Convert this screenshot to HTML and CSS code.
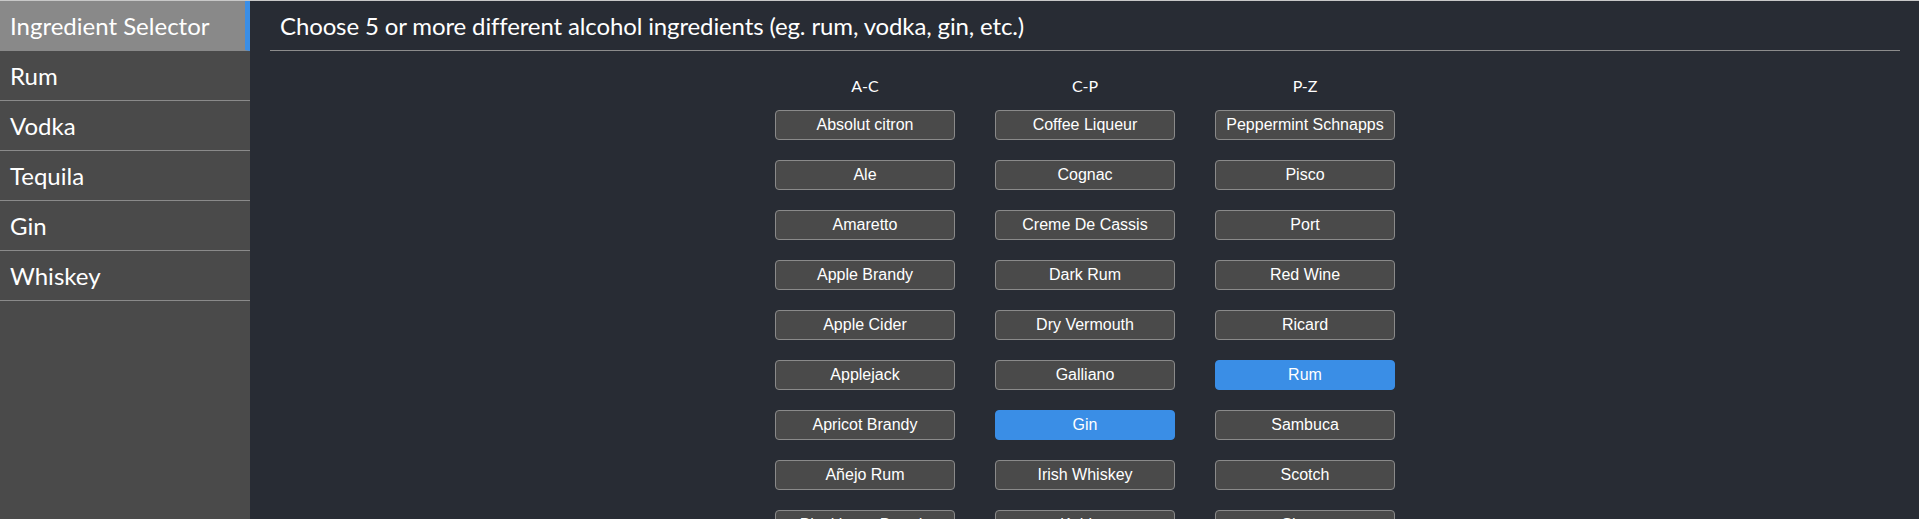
FILE: index.html
```html
<!DOCTYPE html>
<html lang="en">
<head>
<meta charset="utf-8">
<title>Ingredient Selector</title>
<link rel="stylesheet" href="styles.css">
</head>
<body>
<div class="app">
  <nav class="sidebar">
    <div class="nav-item active">Ingredient Selector</div>
    <div class="nav-item">Rum</div>
    <div class="nav-item">Vodka</div>
    <div class="nav-item">Tequila</div>
    <div class="nav-item">Gin</div>
    <div class="nav-item">Whiskey</div>
  </nav>
  <main class="main">
    <h1 class="title">Choose 5 or more different alcohol ingredients (eg. rum, vodka, gin, etc.)</h1>
    <div class="columns">
      <div class="column">
        <div class="col-head">A-C</div>
        <button class="ing">Absolut citron</button>
        <button class="ing">Ale</button>
        <button class="ing">Amaretto</button>
        <button class="ing">Apple Brandy</button>
        <button class="ing">Apple Cider</button>
        <button class="ing">Applejack</button>
        <button class="ing">Apricot Brandy</button>
        <button class="ing">Añejo Rum</button>
        <button class="ing">Blackberry Brandy</button>
      </div>
      <div class="column">
        <div class="col-head">C-P</div>
        <button class="ing">Coffee Liqueur</button>
        <button class="ing">Cognac</button>
        <button class="ing">Creme De Cassis</button>
        <button class="ing">Dark Rum</button>
        <button class="ing">Dry Vermouth</button>
        <button class="ing">Galliano</button>
        <button class="ing selected">Gin</button>
        <button class="ing">Irish Whiskey</button>
        <button class="ing">Kahlua</button>
      </div>
      <div class="column">
        <div class="col-head">P-Z</div>
        <button class="ing">Peppermint Schnapps</button>
        <button class="ing">Pisco</button>
        <button class="ing">Port</button>
        <button class="ing">Red Wine</button>
        <button class="ing">Ricard</button>
        <button class="ing selected">Rum</button>
        <button class="ing">Sambuca</button>
        <button class="ing">Scotch</button>
        <button class="ing">Sherry</button>
      </div>
    </div>
  </main>
</div>
</body>
</html>
```
FILE: styles.css
```css
html, body {
  margin: 0;
  padding: 0;
  height: 100%;
  overflow: hidden;
}
body {
  background: #282c34;
  font-family: "Lato", "Liberation Sans", sans-serif;
  color: #ffffff;
}
.app {
  display: flex;
  min-height: 100%;
  border-top: 1px solid #c8c8c8;
  box-sizing: border-box;
}
.sidebar {
  width: 250px;
  flex: 0 0 250px;
  background: #4a4a4a;
  display: flex;
  flex-direction: column;
  min-height: 600px;
}
.nav-item {
  height: 49px;
  border-bottom: 1px solid #8a8a8a;
  font-size: 24px;
  line-height: 49px;
  padding-left: 10px;
  color: #ffffff;
  box-sizing: content-box;
  white-space: nowrap;
}
.nav-item.active {
  background: #898989;
  border-right: 5px solid #3a8ee6;
  border-bottom-color: #898989;
}
.main {
  flex: 1;
  padding: 0 19px 0 20px;
  min-width: 0;
}
.title {
  margin: 0;
  height: 49px;
  line-height: 49px;
  border-bottom: 1px solid #8c8c8c;
  font-size: 24px;
  font-weight: 400;
  letter-spacing: -0.13px;
  padding-left: 10px;
  white-space: nowrap;
}
.columns {
  display: flex;
  justify-content: center;
  gap: 40px;
  margin-top: 25px;
}
.column {
  width: 180px;
  display: flex;
  flex-direction: column;
  gap: 20px;
}
.col-head {
  font-size: 16px;
  line-height: 20px;
  text-align: center;
  margin-bottom: -6px;
}
.ing {
  height: 30px;
  width: 180px;
  box-sizing: border-box;
  background: #4a4a4a;
  border: 1px solid #8a8a8a;
  border-radius: 4px;
  color: #ffffff;
  font-family: "Liberation Sans", Arial, sans-serif;
  font-size: 16px;
  padding: 0;
  margin: 0;
  cursor: pointer;
}
.ing.selected {
  background: #3a8ee6;
  border-color: #3a8ee6;
}
```
